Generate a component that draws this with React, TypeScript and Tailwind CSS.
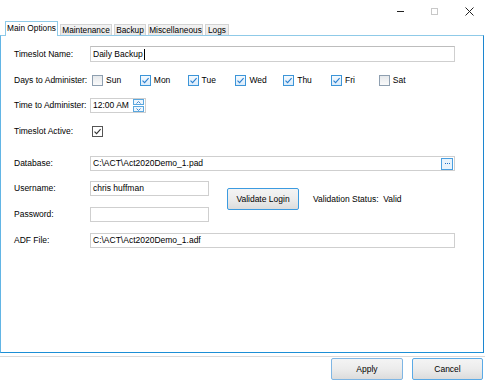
import React from "react";

const font = "font-['Liberation_Sans',Arial,sans-serif]";

const Check = ({ color }: { color: string }) => (
  <svg width="9" height="9" viewBox="0 0 9 9" className="block">
    <path d="M1.5 4.6 L3.6 6.7 L7.6 2.2" fill="none" stroke={color} strokeWidth="1.1" />
  </svg>
);

const DayBox = ({ label, checked }: { label: string; checked: boolean }) => (
  <div className="flex items-center gap-[3px] w-[47.8px] shrink-0">
    <div
      className={
        checked
          ? "w-[11px] h-[11px] border border-[#3c95d8] bg-gradient-to-b from-[#f4faff] to-[#dcecfa] flex items-center justify-center"
          : "w-[11px] h-[11px] border border-[#8e9fb0] bg-gradient-to-b from-[#e6e9ec] to-[#fafafa]"
      }
    >
      {checked && <Check color="#2a7fcf" />}
    </div>
    <span>{label}</span>
  </div>
);

const Label = ({ children }: { children: React.ReactNode }) => (
  <div className="w-[76px] shrink-0 whitespace-nowrap">{children}</div>
);

const tabs = [
  { t: "Maintenance", w: "w-[52px]" },
  { t: "Backup", w: "w-[32px]" },
  { t: "Miscellaneous", w: "w-[55px]" },
  { t: "Logs", w: "w-[24px]" },
];

export default function App() {
  return (
    <div className={`w-[485px] h-[382px] bg-white overflow-hidden text-[8.5px] text-black ${font}`}>
      {/* Title bar */}
      <div className="h-[22px] flex items-center justify-end">
        <svg width="9" height="9" viewBox="0 0 9 9" className="mr-[25px]">
          <line x1="1" y1="4.5" x2="8" y2="4.5" stroke="#222" strokeWidth="1" />
        </svg>
        <svg width="9" height="9" viewBox="0 0 9 9" className="mr-[26px]">
          <rect x="1.5" y="1.5" width="6" height="6" fill="none" stroke="#c8c8c8" strokeWidth="1" />
        </svg>
        <svg width="9" height="9" viewBox="0 0 9 9" className="mr-[11px]">
          <path d="M0.5 0.5 L8.5 8.5 M8.5 0.5 L0.5 8.5" stroke="#222" strokeWidth="1" />
        </svg>
      </div>

      {/* Tabs */}
      <div className="h-[13px] flex items-end pl-[5px] gap-[2px] relative z-10 text-[8.3px] whitespace-nowrap">
        <div className="w-[53px] h-[15px] -mb-[1px] pb-[2px] bg-white border border-b-0 border-[#8fcae8] flex items-center justify-center">
          Main Options
        </div>
        {tabs.map(({ t, w }) => (
          <div
            key={t}
            className={`${w} h-[11px] bg-gradient-to-b from-[#f2f2f2] to-[#e8e8e8] border border-b-0 border-[#d4d4d4] flex items-center justify-center`}
          >
            {t}
          </div>
        ))}
      </div>

      {/* Panel */}
      <div className="h-[318px] w-[484px] border border-t-[#8fcae8] border-l-[#62b5e5] border-r-[#1c86d0] border-b-[#1c8fd6] pl-[13px]">
        <div className="flex items-center mt-[10px] h-[16px]">
          <Label>Timeslot Name:</Label>
          <div className="w-[365px] h-[16px] border border-[#cfcfcf] border-t-[#bdbdbd] bg-white flex items-center pl-[2px]">
            <span>Daily Backup</span>
            <span className="w-px h-[11px] bg-black ml-[1px]" />
          </div>
        </div>

        <div className="flex items-center mt-[12px] h-[13px]">
          <Label>Days to Administer:</Label>
          <div className="flex items-center ml-[2px]">
            <DayBox label="Sun" checked={false} />
            <DayBox label="Mon" checked />
            <DayBox label="Tue" checked />
            <DayBox label="Wed" checked />
            <DayBox label="Thu" checked />
            <DayBox label="Fri" checked />
            <DayBox label="Sat" checked={false} />
          </div>
        </div>

        <div className="flex items-center mt-[11px] h-[15px]">
          <Label>Time to Administer:</Label>
          <div className="w-[56px] h-[15px] border border-[#cfcfcf] flex items-center justify-between pl-[2px] pr-px">
            <span>12:00 AM</span>
            <div className="flex flex-col gap-px">
              <div className="w-[11px] h-[6px] border border-[#5aa7de] bg-[#eef6fd] flex items-center justify-center">
                <svg width="5" height="3" viewBox="0 0 5 3"><path d="M0.5 2.5 L2.5 0.5 L4.5 2.5" fill="none" stroke="#2a7fcf" strokeWidth="0.9" /></svg>
              </div>
              <div className="w-[11px] h-[6px] border border-[#5aa7de] bg-[#eef6fd] flex items-center justify-center">
                <svg width="5" height="3" viewBox="0 0 5 3"><path d="M0.5 0.5 L2.5 2.5 L4.5 0.5" fill="none" stroke="#2a7fcf" strokeWidth="0.9" /></svg>
              </div>
            </div>
          </div>
        </div>

        <div className="flex items-center mt-[12px] h-[13px]">
          <Label>Timeslot Active:</Label>
          <div className="ml-[2px] w-[11px] h-[11px] border border-[#555] bg-white flex items-center justify-center">
            <Check color="#333" />
          </div>
        </div>

        <div className="flex items-center mt-[18px] h-[15px]">
          <Label>Database:</Label>
          <div className="w-[365px] h-[15px] border border-[#cfcfcf] flex items-center justify-between pl-[2px] pr-px">
            <span>C:\ACT\Act2020Demo_1.pad</span>
            <div className="w-[12px] h-[12px] border border-[#4a9fe0] bg-[#e8f3fc] flex items-center justify-center gap-px">
              <span className="w-px h-px bg-[#1f6fc4]" />
              <span className="w-px h-px bg-[#1f6fc4]" />
              <span className="w-px h-px bg-[#1f6fc4]" />
            </div>
          </div>
        </div>

        <div className="flex items-start mt-[10px]">
          <div className="flex flex-col">
            <div className="flex items-center h-[15px]">
              <Label>Username:</Label>
              <div className="w-[119px] h-[15px] border border-[#cfcfcf] flex items-center pl-[2px]">chris huffman</div>
            </div>
            <div className="flex items-center h-[15px] mt-[11px]">
              <Label>Password:</Label>
              <div className="w-[119px] h-[15px] border border-[#cfcfcf]" />
            </div>
          </div>
          <button className="mt-[7px] ml-[18px] w-[72px] h-[22px] border border-[#3c9be0] rounded-[2px] bg-gradient-to-b from-[#f4f4f4] via-[#ececec] to-[#dcdcdc] flex items-center justify-center">
            Validate Login
          </button>
          <div className="mt-[13px] ml-[14px] h-[10px] flex items-center whitespace-nowrap">Validation Status:&nbsp; Valid</div>
        </div>

        <div className="flex items-center mt-[11px] h-[15px]">
          <Label>ADF File:</Label>
          <div className="w-[365px] h-[15px] border border-[#cfcfcf] flex items-center pl-[2px]">C:\ACT\Act2020Demo_1.adf</div>
        </div>
      </div>

      {/* Footer */}
      <div className="mt-[3px] h-px bg-[#dadada]" />
      <div className="flex justify-end gap-[9px] pr-[2px] mt-px">
        <button className="w-[72px] h-[22px] border border-[#7fb6e4] rounded-[2px] bg-gradient-to-b from-[#f4f4f4] via-[#ececec] to-[#dcdcdc] flex items-center justify-center">
          Apply
        </button>
        <button className="w-[71px] h-[22px] border border-[#5aaae6] rounded-[2px] bg-gradient-to-b from-[#f4f4f4] via-[#ececec] to-[#dcdcdc] flex items-center justify-center">
          Cancel
        </button>
      </div>
    </div>
  );
}
